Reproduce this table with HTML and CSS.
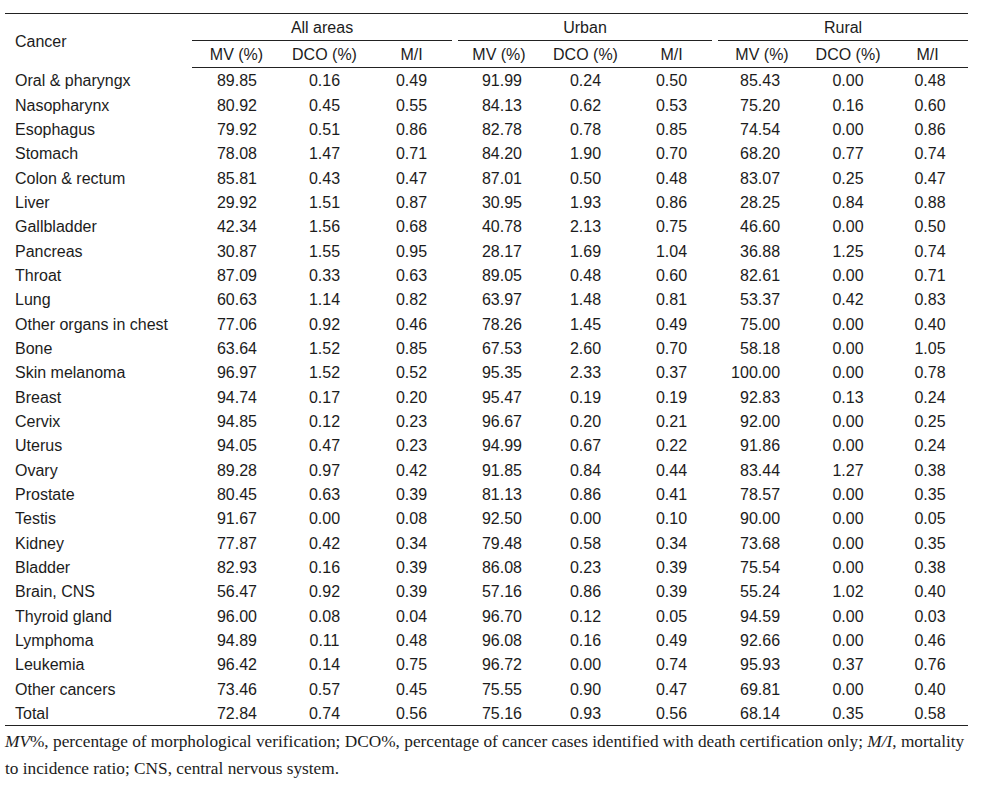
FILE: index.html
```html
<!DOCTYPE html>
<html lang="en">
<head>
<meta charset="utf-8">
<title>Cancer registration quality indicators</title>
<link rel="stylesheet" href="styles.css">
</head>
<body>
<div class="page">
  <table class="data">
    <colgroup>
      <col class="c-name">
      <col class="c-a1"><col class="c-a2"><col class="c-a3">
      <col class="c-u1"><col class="c-u2"><col class="c-u3">
      <col class="c-r1"><col class="c-r2"><col class="c-r3">
    </colgroup>
    <thead>
      <tr class="h1">
        <th rowspan="2" class="name-h">Cancer</th>
        <th colspan="3" class="group"><div class="group-label first">All areas</div></th>
        <th colspan="3" class="group"><div class="group-label">Urban</div></th>
        <th colspan="3" class="group"><div class="group-label last">Rural</div></th>
      </tr>
      <tr class="h2">
        <th>MV (%)</th><th>DCO (%)</th><th>M/I</th>
        <th>MV (%)</th><th>DCO (%)</th><th>M/I</th>
        <th>MV (%)</th><th>DCO (%)</th><th>M/I</th>
      </tr>
    </thead>
    <tbody>
      <tr><td>Oral &amp; pharyngx</td><td>89.85</td><td>0.16</td><td>0.49</td><td>91.99</td><td>0.24</td><td>0.50</td><td>85.43</td><td>0.00</td><td>0.48</td></tr>
      <tr><td>Nasopharynx</td><td>80.92</td><td>0.45</td><td>0.55</td><td>84.13</td><td>0.62</td><td>0.53</td><td>75.20</td><td>0.16</td><td>0.60</td></tr>
      <tr><td>Esophagus</td><td>79.92</td><td>0.51</td><td>0.86</td><td>82.78</td><td>0.78</td><td>0.85</td><td>74.54</td><td>0.00</td><td>0.86</td></tr>
      <tr><td>Stomach</td><td>78.08</td><td>1.47</td><td>0.71</td><td>84.20</td><td>1.90</td><td>0.70</td><td>68.20</td><td>0.77</td><td>0.74</td></tr>
      <tr><td>Colon &amp; rectum</td><td>85.81</td><td>0.43</td><td>0.47</td><td>87.01</td><td>0.50</td><td>0.48</td><td>83.07</td><td>0.25</td><td>0.47</td></tr>
      <tr><td>Liver</td><td>29.92</td><td>1.51</td><td>0.87</td><td>30.95</td><td>1.93</td><td>0.86</td><td>28.25</td><td>0.84</td><td>0.88</td></tr>
      <tr><td>Gallbladder</td><td>42.34</td><td>1.56</td><td>0.68</td><td>40.78</td><td>2.13</td><td>0.75</td><td>46.60</td><td>0.00</td><td>0.50</td></tr>
      <tr><td>Pancreas</td><td>30.87</td><td>1.55</td><td>0.95</td><td>28.17</td><td>1.69</td><td>1.04</td><td>36.88</td><td>1.25</td><td>0.74</td></tr>
      <tr><td>Throat</td><td>87.09</td><td>0.33</td><td>0.63</td><td>89.05</td><td>0.48</td><td>0.60</td><td>82.61</td><td>0.00</td><td>0.71</td></tr>
      <tr><td>Lung</td><td>60.63</td><td>1.14</td><td>0.82</td><td>63.97</td><td>1.48</td><td>0.81</td><td>53.37</td><td>0.42</td><td>0.83</td></tr>
      <tr><td>Other organs in chest</td><td>77.06</td><td>0.92</td><td>0.46</td><td>78.26</td><td>1.45</td><td>0.49</td><td>75.00</td><td>0.00</td><td>0.40</td></tr>
      <tr><td>Bone</td><td>63.64</td><td>1.52</td><td>0.85</td><td>67.53</td><td>2.60</td><td>0.70</td><td>58.18</td><td>0.00</td><td>1.05</td></tr>
      <tr><td>Skin melanoma</td><td>96.97</td><td>1.52</td><td>0.52</td><td>95.35</td><td>2.33</td><td>0.37</td><td>100.00</td><td>0.00</td><td>0.78</td></tr>
      <tr><td>Breast</td><td>94.74</td><td>0.17</td><td>0.20</td><td>95.47</td><td>0.19</td><td>0.19</td><td>92.83</td><td>0.13</td><td>0.24</td></tr>
      <tr><td>Cervix</td><td>94.85</td><td>0.12</td><td>0.23</td><td>96.67</td><td>0.20</td><td>0.21</td><td>92.00</td><td>0.00</td><td>0.25</td></tr>
      <tr><td>Uterus</td><td>94.05</td><td>0.47</td><td>0.23</td><td>94.99</td><td>0.67</td><td>0.22</td><td>91.86</td><td>0.00</td><td>0.24</td></tr>
      <tr><td>Ovary</td><td>89.28</td><td>0.97</td><td>0.42</td><td>91.85</td><td>0.84</td><td>0.44</td><td>83.44</td><td>1.27</td><td>0.38</td></tr>
      <tr><td>Prostate</td><td>80.45</td><td>0.63</td><td>0.39</td><td>81.13</td><td>0.86</td><td>0.41</td><td>78.57</td><td>0.00</td><td>0.35</td></tr>
      <tr><td>Testis</td><td>91.67</td><td>0.00</td><td>0.08</td><td>92.50</td><td>0.00</td><td>0.10</td><td>90.00</td><td>0.00</td><td>0.05</td></tr>
      <tr><td>Kidney</td><td>77.87</td><td>0.42</td><td>0.34</td><td>79.48</td><td>0.58</td><td>0.34</td><td>73.68</td><td>0.00</td><td>0.35</td></tr>
      <tr><td>Bladder</td><td>82.93</td><td>0.16</td><td>0.39</td><td>86.08</td><td>0.23</td><td>0.39</td><td>75.54</td><td>0.00</td><td>0.38</td></tr>
      <tr><td>Brain, CNS</td><td>56.47</td><td>0.92</td><td>0.39</td><td>57.16</td><td>0.86</td><td>0.39</td><td>55.24</td><td>1.02</td><td>0.40</td></tr>
      <tr><td>Thyroid gland</td><td>96.00</td><td>0.08</td><td>0.04</td><td>96.70</td><td>0.12</td><td>0.05</td><td>94.59</td><td>0.00</td><td>0.03</td></tr>
      <tr><td>Lymphoma</td><td>94.89</td><td>0.11</td><td>0.48</td><td>96.08</td><td>0.16</td><td>0.49</td><td>92.66</td><td>0.00</td><td>0.46</td></tr>
      <tr><td>Leukemia</td><td>96.42</td><td>0.14</td><td>0.75</td><td>96.72</td><td>0.00</td><td>0.74</td><td>95.93</td><td>0.37</td><td>0.76</td></tr>
      <tr><td>Other cancers</td><td>73.46</td><td>0.57</td><td>0.45</td><td>75.55</td><td>0.90</td><td>0.47</td><td>69.81</td><td>0.00</td><td>0.40</td></tr>
      <tr><td>Total</td><td>72.84</td><td>0.74</td><td>0.56</td><td>75.16</td><td>0.93</td><td>0.56</td><td>68.14</td><td>0.35</td><td>0.58</td></tr>
    </tbody>
  </table>
  <p class="note"><i>MV</i>%, percentage of morphological verification; DCO%, percentage of cancer cases identified with death certification only; <i>M/I</i>, mortality to incidence ratio; CNS, central nervous system.</p>
</div>
</body>
</html>
```

FILE: styles.css
```css
html, body {
  margin: 0;
  padding: 0;
  background: #ffffff;
}

.page {
  width: 963px;
  padding: 13px 0 0 5px;
  color: #1c1c1c;
}

.data {
  width: 963px;
  table-layout: fixed;
  border-collapse: collapse;
  font-family: "Liberation Sans", Arial, sans-serif;
  font-size: 16px;
  line-height: 18px;
  border-top: 1px solid #222;
  border-bottom: 1px solid #222;
}

.c-name { width: 187px; }
.c-a1 { width: 89px; }
.c-a2 { width: 87px; }
.c-a3 { width: 87px; }
.c-u1 { width: 88px; }
.c-u2 { width: 85px; }
.c-u3 { width: 87px; }
.c-r1 { width: 94px; }
.c-r2 { width: 78px; }
.c-r3 { width: 81px; }

.data th {
  font-weight: normal;
  padding: 0;
  text-align: center;
}

.data th.name-h {
  text-align: left;
  padding: 2px 0 0 10px;
  vertical-align: middle;
}

.h1 th.group {
  height: 27px;
  vertical-align: bottom;
}

.group-label {
  margin: 0 3px;
  padding-bottom: 3px;
  border-bottom: 1px solid #222;
}

.group-label.first { margin-left: 0; }

.group-label.last { margin-right: 0; }

.data .h2 th {
  height: 24px;
  padding-top: 2px;
  vertical-align: middle;
  border-bottom: 1px solid #222;
}

.data td {
  height: 22.35px;
  padding: 2px 0 0 0;
  text-align: center;
  vertical-align: middle;
}

.data td:first-child {
  text-align: left;
  padding-left: 10px;
}

.data td:nth-child(2) {
  text-align: right;
  padding-right: 24px;
}

.data td:nth-child(5) {
  text-align: right;
  padding-right: 21px;
}

.data td:nth-child(8) {
  text-align: right;
  padding-right: 29px;
}

.data td:nth-child(10) {
  padding-left: 5px;
}

.note {
  margin: 2px 0 0 0;
  font-family: "Liberation Serif", "Times New Roman", serif;
  font-size: 17.3px;
  line-height: 27px;
  color: #1c1c1c;
}
```
